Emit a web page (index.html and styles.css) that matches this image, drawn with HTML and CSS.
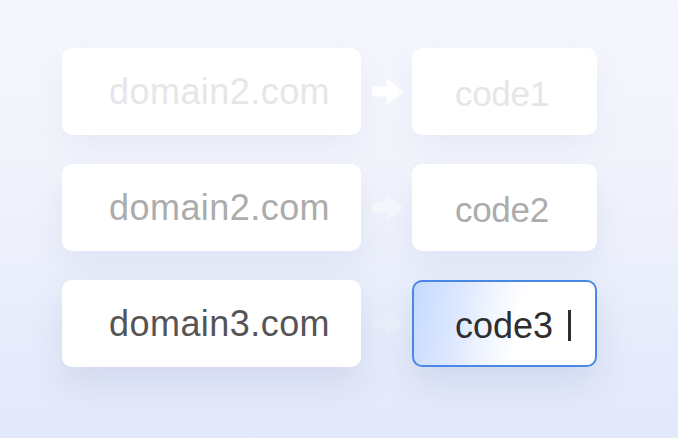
FILE: index.html
```html
<!DOCTYPE html>
<html>
<head>
<meta charset="utf-8">
<link rel="stylesheet" href="styles.css">
</head>
<body>
<div class="stage">
  <div class="row row-1">
    <div class="card domain"><span class="txt">domain2.com</span></div>
    <div class="arrow-cell"><svg class="arrow" width="31" height="27" viewBox="0 0 31 27"><path d="M2 8.5 H15 V3 Q15 0.5 17.2 2.2 L29.2 11.8 Q31 13.5 29.2 15.2 L17.2 24.8 Q15 26.5 15 24 V18.5 H2 Q0 18.5 0 16.5 V10.5 Q0 8.5 2 8.5 Z"/></svg></div>
    <div class="card code"><span class="txt">code1</span></div>
  </div>
  <div class="row row-2">
    <div class="card domain"><span class="txt">domain2.com</span></div>
    <div class="arrow-cell"><svg class="arrow" width="31" height="27" viewBox="0 0 31 27"><path d="M2 8.5 H15 V3 Q15 0.5 17.2 2.2 L29.2 11.8 Q31 13.5 29.2 15.2 L17.2 24.8 Q15 26.5 15 24 V18.5 H2 Q0 18.5 0 16.5 V10.5 Q0 8.5 2 8.5 Z"/></svg></div>
    <div class="card code"><span class="txt">code2</span></div>
  </div>
  <div class="row row-3">
    <div class="card domain"><span class="txt">domain3.com</span></div>
    <div class="arrow-cell"><svg class="arrow" width="31" height="27" viewBox="0 0 31 27"><path d="M2 8.5 H15 V3 Q15 0.5 17.2 2.2 L29.2 11.8 Q31 13.5 29.2 15.2 L17.2 24.8 Q15 26.5 15 24 V18.5 H2 Q0 18.5 0 16.5 V10.5 Q0 8.5 2 8.5 Z"/></svg></div>
    <div class="card code active"><span class="txt">code3</span><span class="caret"></span></div>
  </div>
</div>
</body>
</html>
```

FILE: styles.css
```css
* { box-sizing: border-box; }
html, body { margin: 0; height: 100%; }
body {
  width: 678px;
  height: 438px;
  overflow: hidden;
  background: linear-gradient(180deg, #f6f7fd 0%, #f1f3fc 40%, #e6ecfb 80%, #e2e9fb 100%);
  font-family: "Liberation Sans", Arial, sans-serif;
}
.stage {
  display: flex;
  flex-direction: column;
  gap: 29px;
  padding: 48px 0 0 62px;
}
.row {
  display: grid;
  grid-template-columns: 299px 51px 185px;
  height: 87px;
}
.card {
  background: #fff;
  border-radius: 10px;
  display: flex;
  align-items: center;
  box-shadow: 0 14px 30px rgba(120, 130, 180, 0.10);
}
.domain { padding-left: 47px; }
.code { padding-left: 43px; }
.txt {
  line-height: 40px;
}
.domain .txt { font-size: 36px; letter-spacing: 0.45px; }
.code .txt { font-size: 35px; letter-spacing: -0.3px; margin-top: 4px; }
.active .txt { font-size: 36px; letter-spacing: 0; }
.row-1 .txt { color: #e6e6e8; }
.row-1 .card { box-shadow: 0 12px 28px rgba(120, 130, 180, 0.08); }
.row-2 .txt { color: #acacad; }
.row-2 .card { box-shadow: 0 14px 30px rgba(120, 130, 180, 0.11); }
.row-3 .txt { color: #555557; }
.row-3 .card { box-shadow: 0 16px 34px rgba(110, 120, 170, 0.16); }
.arrow-cell {
  display: flex;
  align-items: center;
  padding-left: 11px;
}
.arrow { display: block; }
.row-1 .arrow { fill: #ffffff; }
.row-2 .arrow { fill: #f7f8fb; opacity: 0.8; }
.row-3 .arrow { fill: #eef1fa; opacity: 0.5; }
.code.active {
  border: 2px solid #4a88e6;
  padding-left: 41px;
  background: linear-gradient(100deg, #c6daff 0%, #dde8ff 25%, #f0f5ff 42%, #ffffff 58%, #ffffff 100%);
  box-shadow: 0 16px 34px rgba(110, 120, 170, 0.18);
}
.row-3 .active .txt { color: #2e2e30; }
.caret {
  width: 3px;
  height: 31px;
  background: #2e2e30;
  margin-left: 15px;
  margin-top: 3px;
}
```
